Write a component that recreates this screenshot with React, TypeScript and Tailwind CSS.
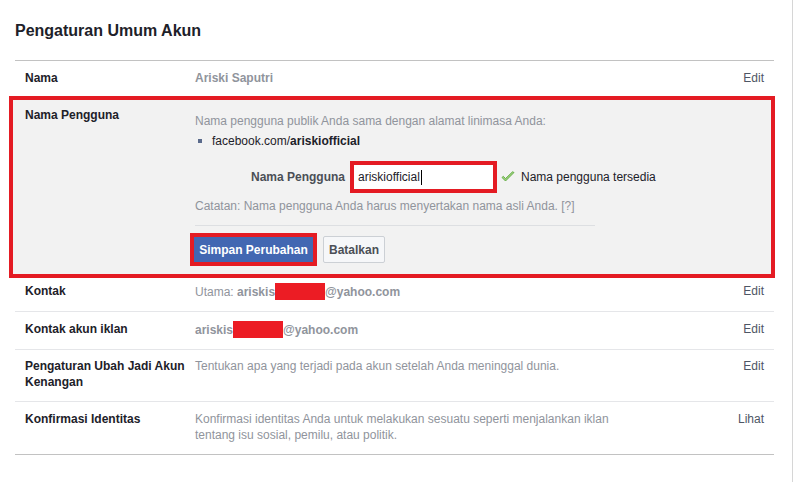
import React from "react";

const font = { fontFamily: '"Liberation Sans", Arial, Helvetica, sans-serif' };

function Row({
  label,
  children,
  action,
  className = "",
}: {
  label: React.ReactNode;
  children: React.ReactNode;
  action: string;
  className?: string;
}) {
  return (
    <div className={`flex text-[12px] leading-[16px] ${className}`}>
      <div className="w-[180px] shrink-0 pl-[10px] font-bold text-[#1d2129]">{label}</div>
      <div className="flex-1 text-[#90949c]">{children}</div>
      <div className="pr-[10px] text-right text-[#4e5665]">{action}</div>
    </div>
  );
}

function Redact({ w }: { w: number }) {
  return (
    <span
      className="inline-block h-[17px] bg-[#ec1c24] align-[-4px]"
      style={{ width: w }}
    />
  );
}

export default function App() {
  return (
    <div style={font} className="h-[482px] w-[800px] bg-white">
      <div className="h-[482px] w-[793px] border-r border-[#d6d6d6] pl-[15px] pr-[18px]">
        <div className="border-b border-[#c2c2c2] pb-[19px] pt-[21px] text-[16px] font-bold leading-[20px] text-[#1d2129]">
          Pengaturan Umum Akun
        </div>

        <Row label="Nama" action="Edit" className="pb-[10px] pt-[9px]">
          <span className="font-bold">Ariski Saputri</span>
        </Row>

        {/* Edit panel outlined in red */}
        <div className="-ml-[6px] -mr-[1px] flex border-4 border-[#e41b23] bg-[#f2f2f2] pb-[8px] text-[12px] leading-[16px]">
          <div className="w-[182px] shrink-0 pl-[12px] pt-[7px] font-bold text-[#1d2129]">
            Nama Pengguna
          </div>
          <div className="flex-1 pt-[13px]">
            <div className="text-[#90949c]">
              Nama pengguna publik Anda sama dengan alamat linimasa Anda:
            </div>
            <div className="mt-[4px] flex items-center text-[#1d2129]">
              <span className="ml-[3px] mr-[10px] inline-block h-[4px] w-[4px] bg-[#5b6b8c]" />
              <span>
                facebook.com/<span className="font-bold">ariskiofficial</span>
              </span>
            </div>
            <div className="mt-[12px] flex items-center">
              <div className="w-[150px] text-right font-bold text-[#4b4f56]">Nama Pengguna</div>
              <div className="ml-[5px] border-4 border-[#e41b23] bg-white">
                <div className="flex h-[24px] w-[139px] items-center pl-[4px] text-[#1d2129]">
                  <span>ariskiofficial</span>
                  <span className="ml-[1px] inline-block h-[15px] w-[1px] bg-black" />
                </div>
              </div>
              <svg width="14" height="12" viewBox="0 0 14 12" className="ml-[4px]">
                <path
                  d="M1 6.5 L4.5 10 L13 1.5 L11.5 0.8 L4.5 7.6 L2.3 5.3 Z"
                  fill="#9fd37f"
                  stroke="#5fa83f"
                  strokeWidth="0.9"
                  strokeLinejoin="round"
                />
              </svg>
              <span className="ml-[6px] text-[#1d2129]">Nama pengguna tersedia</span>
            </div>
            <div className="mt-[5px] text-[#90949c]">
              Catatan: Nama pengguna Anda harus menyertakan nama asli Anda. [?]
            </div>
            <div className="mt-[11px] h-px w-[400px] bg-[#dddfe2]" />
            <div className="mt-[7px] flex items-center">
              <div className="-ml-[5px] border-4 border-[#e41b23] bg-[#4267b2]">
                <div className="flex h-[25px] w-[119px] items-center justify-center font-bold text-white">
                  Simpan Perubahan
                </div>
              </div>
              <div className="ml-[6px] flex h-[27px] w-[62px] items-center justify-center rounded-[2px] border border-[#ccd0d5] bg-[#f6f7f9] font-bold text-[#4b4f56]">
                Batalkan
              </div>
            </div>
          </div>
        </div>

        <Row label="Kontak" action="Edit" className="pb-[11px] pt-[5px]">
          Utama: <span className="font-bold">ariskis</span>
          <Redact w={50} />
          <span className="font-bold">@yahoo.com</span>
        </Row>

        <Row label="Kontak akun iklan" action="Edit" className="border-t border-[#e5e6e9] pb-[11px] pt-[9px]">
          <span className="font-bold">ariskis</span>
          <Redact w={50} />
          <span className="font-bold">@yahoo.com</span>
        </Row>

        <Row
          label={
            <>
              Pengaturan Ubah Jadi Akun
              <br />
              Kenangan
            </>
          }
          action="Edit"
          className="border-t border-[#e5e6e9] pb-[11px] pt-[8px]"
        >
          Tentukan apa yang terjadi pada akun setelah Anda meninggal dunia.
        </Row>

        <Row
          label="Konfirmasi Identitas"
          action="Lihat"
          className="border-b border-t border-[#e5e6e9] border-b-[#c2c2c2] pb-[11px] pt-[9px]"
        >
          Konfirmasi identitas Anda untuk melakukan sesuatu seperti menjalankan iklan
          <br />
          tentang isu sosial, pemilu, atau politik.
        </Row>
      </div>
    </div>
  );
}
